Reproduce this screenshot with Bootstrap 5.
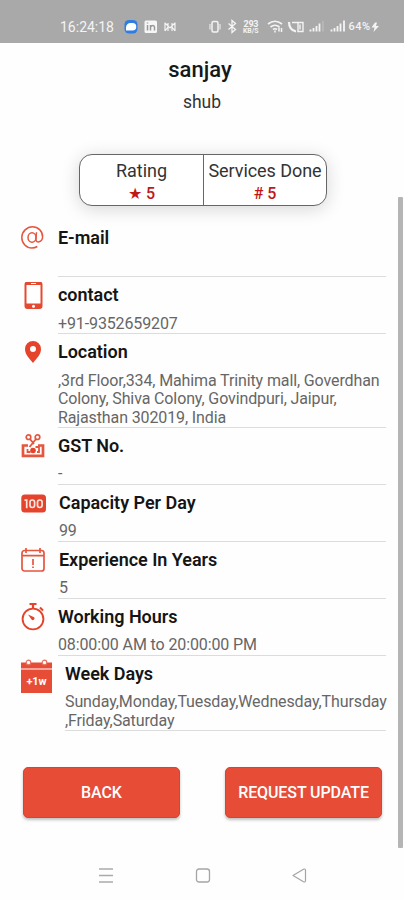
<!DOCTYPE html>
<html lang="en">
<head>
<meta charset="utf-8">
<meta name="viewport" content="width=device-width, initial-scale=1">
<title>Profile</title>
<link href="https://cdn.jsdelivr.net/npm/bootstrap@5.3.0/dist/css/bootstrap.min.css" rel="stylesheet">
<style>
body{font-family:Roboto,"Liberation Sans",sans-serif;background:#fefefe;color:#1c1f20;height:900px;overflow:hidden}
.status-strip{height:43px;background:#a9a9a9;color:#f4f4f4;padding:10px 0 0 60px;font-size:14px}
.clock{width:54px;padding-top:10px;line-height:14px;white-space:nowrap}
.status-strip svg{display:block;flex:none}
.profile{height:111px;padding-top:12px;padding-right:4px}
.profile h1{font-size:22px;line-height:30px;font-weight:500;margin:0;color:#14191a}
.profile p{font-size:17.5px;line-height:22px;margin:6px 0 0;padding-left:4px;color:#333}
.stats{width:248px;height:52px;margin-left:79px;border:1px solid #666;border-radius:13px;background:#fff;box-shadow:0 3px 18px rgba(0,0,0,.16)}
.stats>div{line-height:22px;padding-top:5px;font-size:18px;white-space:nowrap;letter-spacing:-.05px;color:#333}
.stats>div+div{border-left:1px solid #666}
.stats b{display:block;font-size:16px;font-weight:500;line-height:23px;color:#c01818}
.details{padding:14px 18px 0 20px}
.entry{min-height:57px}
.entry-icon{width:38px;flex:none;padding-top:5px}
.entry-icon.wide{width:45px;padding-top:2px}
.entry-icon svg{display:block}
.entry-body{border-bottom:1px solid #dcdcdc;padding-top:8px;min-width:0}
.entry h2{font-size:18px;line-height:20px;font-weight:600;margin:0 0 9.5px;letter-spacing:-.03px;color:#151515}
.entry p{font-size:16px;line-height:18.5px;margin:0 0 -.5px;color:#666;white-space:nowrap;min-height:18.5px;letter-spacing:-.12px}
.shift{padding-left:1px}
.actions{padding:36px 22px 0 23px}
.btn-app{width:157px;height:51px;padding:2px 0 0;background:#e64c36;border:1px solid #e2402a;border-radius:5px;color:#fff;font-size:16px;font-weight:500;letter-spacing:-.1px;box-shadow:0 2px 3px rgba(0,0,0,.25);white-space:nowrap}
.scroll-thumb{position:absolute;left:398px;top:197px;width:5px;height:651px;background:#b5b5b5;border-radius:1px}
.nav-keys{padding:49px 97px 0 98px}
</style>
<script src="https://cdn.jsdelivr.net/npm/bootstrap@5.3.0/dist/js/bootstrap.bundle.min.js"></script>
</head>
<body class="position-relative">
<header class="status-strip d-flex">
  <div class="clock">16:24:18</div>
  <svg width="290" height="33" viewBox="114 10 290 33" fill="none" stroke="#f4f4f4">
    <rect x="124.500" y="20" width="13" height="13.500" rx="4.500" fill="#2f7de0" stroke="none"/>
    <path d="M126 30.500v-3a4.500 4.500 0 0 1 4.500-4.500h2a3.700 3.700 0 0 1 0 7.500z" fill="#fff" stroke="none"/>
    <rect x="144.500" y="20.500" width="12.500" height="12.500" rx="1.500" fill="#f6f6f6" stroke="none"/>
    <path d="M147.500 25v5.500M147.500 22.500v1M150.500 30.500V25M150.500 27q3-3 4 0v3.500" stroke="#999" stroke-width="1.500"/>
    <path d="M165 22.500v8.500M175 22.500v8.500M165 23l5 5 5-5M165 31l3-4M175 31l-3-4M168 23v8M172 23v8" stroke-width="1.200"/>
    <rect x="212" y="21.500" width="6" height="10.500" rx="1.500" stroke-width="1.500"/><path d="M210 24v5.500M220 24v5.500"/>
    <path d="M228.500 23.500l7 6-3.500 3v-12l3.500 3-7 6" stroke-width="1.300"/>
    <g fill="#f4f4f4" stroke="none" font-weight="700" font-family="Roboto,sans-serif"><text x="243.500" y="26.500" font-size="9" textLength="15">293</text><text x="243" y="33" font-size="7" textLength="15.500" lengthAdjust="spacingAndGlyphs">KB/S</text></g>
    <path d="M268 24q7-5.500 14 0M270.500 27q4.500-3.500 9 0M273 29.500q2-1.500 4 0" stroke-width="1.600"/><path d="M275 32.500v-2M279 27.500v4M281.500 28v4" stroke-width="1.500"/>
    <path d="M289 22c0 5 3 8.500 7 9.500" stroke-width="2.200"/><path d="M292 22.500h11v9h-5v-9M300 24.500v5" stroke-width="1.400"/>
    <path d="M310.500 31.500v-2M313.500 31.500v-3.500M316.500 31.500v-5.500M319.500 31.500v-8" stroke-width="1.800"/><path d="M323 31.500V21" opacity=".25" stroke-width="1.500"/>
    <path d="M331.500 31.500v-2M334.500 31.500v-3.500M337.500 31.500v-5.500M340.500 31.500v-8M344 31.500V20.500" stroke-width="1.800"/>
    <text x="348.500" y="30" textLength="21.500" fill="#f4f4f4" stroke="none" font-family="Roboto,sans-serif" font-size="11" font-weight="500">64%</text>
    <path d="M375 22.500l-3.500 5h3l-1 4.500 5.500-6h-3l1-3.500z" fill="#f4f4f4" stroke="none"/>
  </svg>
</header>
<main>
  <section class="profile text-center">
    <h1>sanjay</h1>
    <p>shub</p>
  </section>
  <section class="stats d-flex text-center">
    <div class="w-50">Rating<b>★ 5</b></div>
    <div class="w-50">Services Done<b># 5</b></div>
  </section>
  <section class="details">
    <div class="entry d-flex">
      <div class="entry-icon"><svg width="26" height="27" fill="none" stroke="#e5563f" stroke-width="1.500"><ellipse cx="12" cy="12.500" rx="4" ry="4.800"/><path d="M16.500 7.300l-.6 7.200c0 4 6.400 3 6.700-2.500C22.700 6 18 1.700 12.500 1.700S1.800 6.500 1.800 12.500s4.700 10.400 10 10.400c2 0 4-.5 5.500-1.400"/></svg></div>
      <div class="entry-body flex-grow-1"><h2>E-mail</h2><p></p></div>
    </div>
    <div class="entry d-flex">
      <div class="entry-icon"><svg width="26" height="30"><path fill="#e34a31" fill-rule="evenodd" d="M7.500-.5h12a3 3 0 0 1 3 3v21.500a3 3 0 0 1-3 3h-12a3 3 0 0 1-3-3V2.500a3 3 0 0 1 3-3zM6.500 3v18.500h14V3zM11 .9v1h5v-1zM13.500 22.800a1.500 1.500 0 1 0 0 3 1.500 1.500 0 0 0 0-3z"/></svg></div>
      <div class="entry-body flex-grow-1"><h2>contact</h2><p>+91-9352659207</p></div>
    </div>
    <div class="entry d-flex">
      <div class="entry-icon"><svg width="26" height="27"><path fill="#e5432b" fill-rule="evenodd" d="M13 2a8 8 0 0 1 8 8c0 5.500-4.500 9.500-8 14-3.500-4.500-8-8.500-8-14a8 8 0 0 1 8-8zm0 5a3 3 0 1 0 0 6 3 3 0 0 0 0-6z"/></svg></div>
      <div class="entry-body flex-grow-1"><h2>Location</h2><p>,3rd Floor,334, Mahima Trinity mall, Goverdhan<br>Colony, Shiva Colony, Govindpuri, Jaipur,<br>Rajasthan 302019, India</p></div>
    </div>
    <div class="entry d-flex">
      <div class="entry-icon"><svg width="26" height="27" fill="none" stroke="#e5563f"><path d="M8 12.500H3v10.300h20V12.500h-5" stroke-width="2.700"/><circle cx="8.500" cy="4.200" r="2.300" stroke-width="1.700"/><circle cx="17.500" cy="4.200" r="2.300" stroke-width="1.700"/><path d="M10 6l4 5M16 6l-6.500 8M7.500 16v3h3M15.500 14h3.500v5h-2" stroke-width="1.800"/><circle cx="13" cy="17.500" r="2.800" fill="#e5432b" stroke="none"/></svg></div>
      <div class="entry-body flex-grow-1"><h2>GST No.</h2><p>-</p></div>
    </div>
    <div class="entry d-flex">
      <div class="entry-icon"><svg width="27" height="27"><rect x="1.300" y="4.500" width="24.700" height="18" rx="3.500" fill="#e5432b"/><g fill="none" stroke="#fbe4df" stroke-width="1.700"><path d="M4.500 10.200h2.200v8"/><rect x="10" y="10" width="4.600" height="7.500" rx="2.200"/><rect x="17.500" y="10" width="4.600" height="7.500" rx="2.200"/></g></svg></div>
      <div class="entry-body flex-grow-1 shift"><h2>Capacity Per Day</h2><p>99</p></div>
    </div>
    <div class="entry d-flex">
      <div class="entry-icon"><svg width="26" height="27" fill="none" stroke="#e5563f" stroke-width="1.700"><rect x="2" y="3.500" width="22" height="20.500" rx="2.500"/><path d="M2 8.700h22M6 1v5M20 1v5M13 12v6M13 19.500v1.500" /></svg></div>
      <div class="entry-body flex-grow-1 shift"><h2>Experience In Years</h2><p>5</p></div>
    </div>
    <div class="entry d-flex">
      <div class="entry-icon"><svg width="26" height="29" overflow="visible" fill="none" stroke="#e5432b"><circle cx="13" cy="15" r="10.400" stroke-width="1.900"/><path d="M9.500 0h7M13 0v5" stroke-width="2.200"/><path d="M20 3.500l3 3" stroke-width="2"/><path d="M8 10.500l3.700 5.300a1.800 1.800 0 0 0 2.500-2.500z" fill="#e5432b" stroke="none"/></svg></div>
      <div class="entry-body flex-grow-1"><h2>Working Hours</h2><p>08:00:00 AM to 20:00:00 PM</p></div>
    </div>
    <div class="entry d-flex">
      <div class="entry-icon wide"><svg width="33" height="36"><path d="M1 4.500h31v6H1zM1 11.500h31V35H1z" fill="#e64c36"/><g fill="#fff" stroke="#e9705e" stroke-width="1.200"><circle cx="8.500" cy="4.500" r="2.300"/><circle cx="24.500" cy="4.500" r="2.300"/></g><text x="6.500" y="26.500" textLength="20" fill="#fff" font-family="Roboto,sans-serif" font-size="11" font-weight="700">+1w</text></svg></div>
      <div class="entry-body flex-grow-1"><h2>Week Days</h2><p>Sunday,Monday,Tuesday,Wednesday,Thursday<br>,Friday,Saturday</p></div>
    </div>
  </section>
  <div class="actions d-flex justify-content-between">
    <button class="btn btn-app">BACK</button>
    <button class="btn btn-app">REQUEST UPDATE</button>
  </div>
</main>
<footer class="nav-keys d-flex justify-content-between">
  <svg width="16" height="17" stroke="#aaa" stroke-width="1.300"><path d="M1 2h14M1 8.500h14M1 15h14"/></svg>
  <svg width="16" height="17" fill="none" stroke="#a5a5a5" stroke-width="1.300"><rect x="1.500" y="2" width="13" height="13" rx="2.500"/></svg>
  <svg width="16" height="17" fill="none" stroke="#a5a5a5" stroke-width="1.200" stroke-linejoin="round"><path d="M2 8.500L12.500 2.200Q14.500 1.500 14.500 3.500v10q0 2-2 1.300z"/></svg>
</footer>
<div class="scroll-thumb"></div>
</body>
</html>
